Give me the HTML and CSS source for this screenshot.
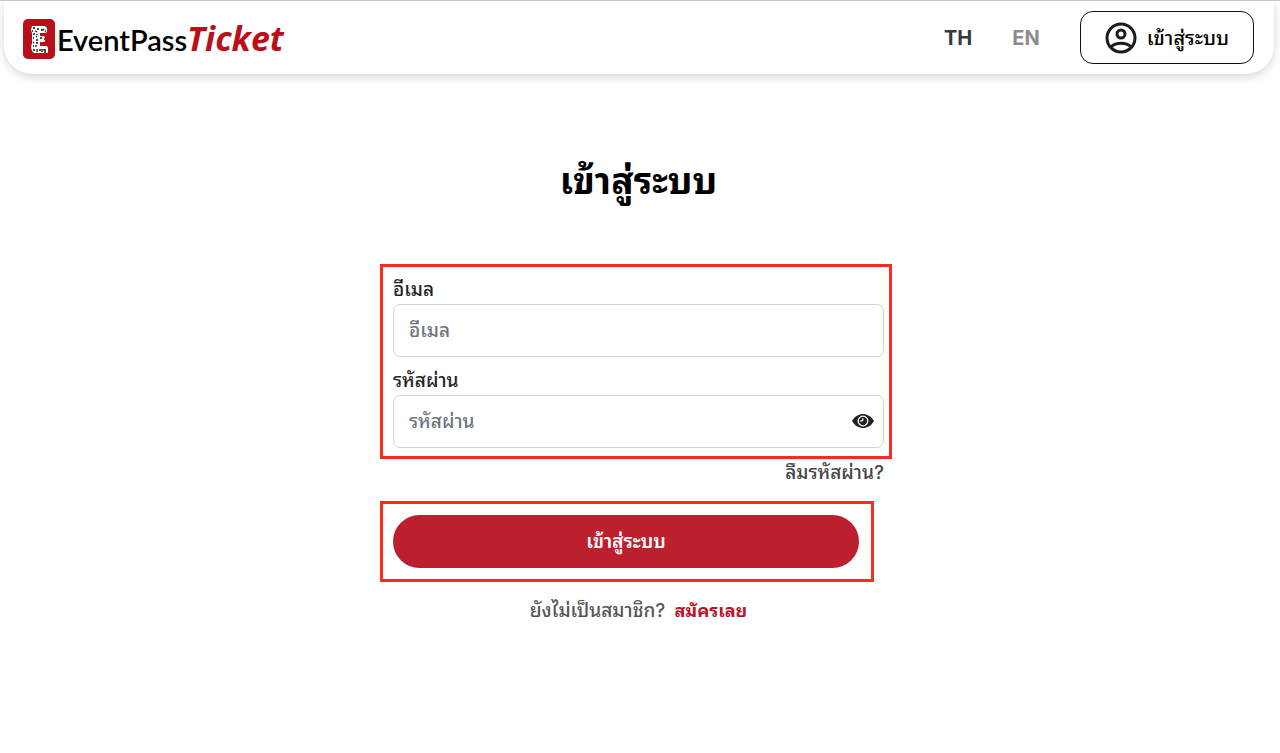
FILE: index.html
```html
<!DOCTYPE html>
<html lang="th">
<head>
<meta charset="utf-8">
<meta name="viewport" content="width=device-width, initial-scale=1">
<title>EventPassTicket</title>
<link rel="stylesheet" href="styles.css">
</head>
<body>
<header class="navbar">
  <a class="brand" href="#">
    <svg class="brand-mark" viewBox="0 0 32 40" aria-hidden="true">
      <rect width="32" height="40" rx="5" fill="#b90f1a"/>
      <path d="M9 7h13l2 2v4l-2 1h-5v3h4l1 2v3l-1 1h-4v4h7l1 2v4l-1 1H11l-2-2-1-4 1-4V14L8 11z" fill="#fff"/>
      <path d="M10 9h2m2 1h2m2 1h2l1-1m1 2h1M9 12h1m2 0l2 1m-4 2h2m1 2l1 1m3 1h2m2 1h1M10 19h1m2 2h2m-5 2l1 1m2 0h2m-5 3h1m2-1v2M10 31h2m2-1v3m2-2h2m1-1v3m2-3v1h2m-2 2h2M14 16v-1" fill="none" stroke="#111" stroke-width="1.300"/>
    </svg>
    <span class="brand-name">EventPass<b class="brand-accent">Ticket</b></span>
  </a>
  <nav class="nav-actions">
    <a class="lang lang-active" href="#">TH</a>
    <a class="lang" href="#">EN</a>
    <button class="account" type="button">
      <svg class="account-icon" viewBox="0 0 32 32" fill="none" stroke="#1b1c20" stroke-width="3" aria-hidden="true">
        <circle cx="16" cy="16" r="14"/>
        <circle cx="16" cy="12" r="4"/>
        <path d="M6 25c5-5 15-5 20 0"/>
      </svg>
      <span>เข้าสู่ระบบ</span>
    </button>
  </nav>
</header>
<main class="login">
  <h1 class="title">เข้าสู่ระบบ</h1>
  <form class="form">
    <div class="marked fields">
      <label class="label" for="email">อีเมล</label>
      <input class="input" id="email" type="email" placeholder="อีเมล">
      <label class="label label-next" for="password">รหัสผ่าน</label>
      <div class="password">
        <input class="input" id="password" type="password" placeholder="รหัสผ่าน">
        <button class="reveal" type="button" aria-label="แสดงรหัสผ่าน">
          <svg class="eye" viewBox="0 0 22 14" aria-hidden="true">
            <path d="M0 7C3 2 7 0 11 0s8 2 11 7c-3 5-7 7-11 7S3 12 0 7z" fill="#1f2328"/>
            <circle cx="11" cy="7" r="4.800" fill="none" stroke="#fff" stroke-width="1.300"/>
            <path d="M8.300 6.800c1.800.7 3-.5 2.400-2.400" fill="none" stroke="#fff" stroke-width="1.400"/>
          </svg>
        </button>
      </div>
    </div>
    <a class="forgot" href="#">ลืมรหัสผ่าน?</a>
    <div class="marked action">
      <button class="submit" type="submit">เข้าสู่ระบบ</button>
    </div>
    <p class="signup">ยังไม่เป็นสมาชิก? <a class="signup-link" href="#">สมัครเลย</a></p>
  </form>
</main>
</body>
</html>
```
FILE: styles.css
```css
* { box-sizing: border-box; }
body {
  margin: 0;
  padding: 0 3px 0 0;
  border-top: 1px solid #c8c8c8;
  background: #fff;
  color: #1f2328;
  font: 500 19px/28px Inter, "Noto Sans Thai Looped", "Noto Looped Thai", Loma, "Noto Sans Thai", "Noto Sans", sans-serif;
}
a { color: inherit; text-decoration: none; }
button, input { font: inherit; }
button { cursor: pointer; }
.navbar {
  display: flex;
  align-items: center;
  justify-content: space-between;
  height: 73px;
  margin: 0 3px 0 4px;
  padding: 0 20px 0 19px;
  border-radius: 0 0 28px 28px;
  box-shadow: 0 3px 10px rgba(0, 0, 0, .16);
}
.brand { display: flex; align-items: center; gap: 2px; margin-top: 3px; }
.brand-mark { width: 32px; height: 40px; }
.brand-name { color: #000; font: 600 29px/40px Lato, sans-serif; }
.brand-accent { color: #b90f1a; font: italic 700 34px/40px "Open Sans", sans-serif; }
.nav-actions { display: flex; align-items: center; gap: 40px; }
.lang { color: #8c8c8c; font-size: 20px; font-weight: 700; }
.lang-active { color: #343a40; }
.account {
  display: flex;
  align-items: center;
  gap: 10px;
  height: 53px;
  padding: 0 24px;
  border: 1px solid #111;
  border-radius: 13px;
  background: #fff;
  color: #000;
  font-size: 20px;
}
.account-icon { width: 32px; height: 32px; }
.login { max-width: 491px; margin: 0 auto; }
.title {
  margin: 77px 0 53px;
  color: #000;
  font-size: 37px;
  font-weight: 700;
  line-height: 60px;
  text-align: center;
}
.form { display: flex; flex-direction: column; }
.marked { border: 3px solid #fb2b1d; }
.fields {
  display: flex;
  flex-direction: column;
  margin: 0 -8px 0 -13px;
  padding: 9px 5px 8px 10px;
}
.label-next { margin-top: 10px; }
.input {
  width: 100%;
  height: 53px;
  padding: 0 15px;
  border: 1px solid #ced4da;
  border-radius: 7px;
  background: #fff;
}
.input::placeholder { color: #6c757d; opacity: 1; }
.password { display: grid; align-items: center; }
.password .input, .reveal { grid-area: 1 / 1; }
.reveal {
  justify-self: end;
  display: flex;
  margin: 0 10px 2px 0;
  padding: 0;
  border: 0;
  background: none;
}
.eye { width: 22px; height: 14px; }
.forgot { align-self: flex-end; color: #444; }
.action { margin: 14px 10px 0 -13px; padding: 11px 12px 11px 10px; }
.submit {
  display: block;
  width: 100%;
  height: 53px;
  border: 0;
  border-radius: 27px;
  background: #bc202e;
  color: #fff;
  font-weight: 600;
}
.signup { margin: 15px 0 0; color: #555; text-align: center; }
.signup-link { margin-left: 4px; color: #bc1529; font-size: 18px; font-weight: 700; }
```
